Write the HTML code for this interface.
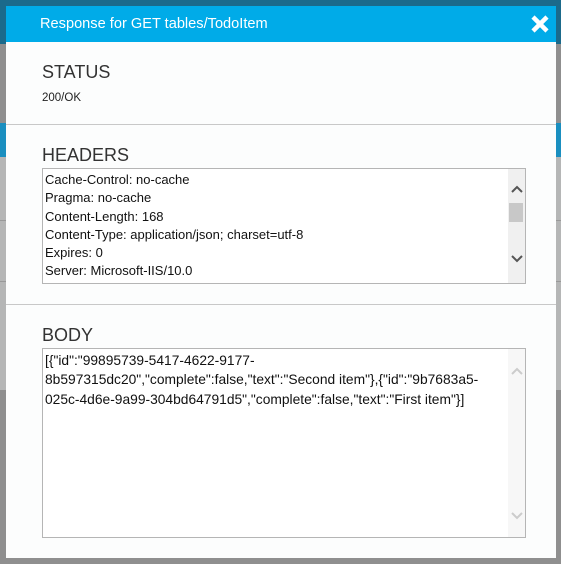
<!DOCTYPE html>
<html><head><style>
*{margin:0;padding:0;box-sizing:border-box}
body{width:561px;height:564px;overflow:hidden;position:relative;background:#8f8f8f;font-family:"Liberation Sans",sans-serif;color:#222}
.a{position:absolute}
.ta{position:absolute;border:1px solid #b5b5b5;background:#fff;font-size:13px;line-height:18.3px;padding:2px 0 0 2px;overflow:hidden;white-space:nowrap;color:#111}
h2{position:absolute;font-weight:normal;font-size:18px;color:#333;left:42px}
.sb{position:absolute;right:0;top:0;bottom:0;width:17px;background:#f0f0f0}
</style></head><body>
<div class="a" style="left:0;top:0;width:561px;height:44px;background:#1b6a8b"></div>
<div class="a" style="left:0;top:123px;width:561px;height:34px;background:#1a8fc0"></div>
<div class="a" style="left:0;top:157px;width:561px;height:233px;background:#b5b6b6"></div>
<div class="a" style="left:0;top:220px;width:561px;height:1px;background:#999"></div>
<div class="a" style="left:0;top:281px;width:561px;height:1px;background:#999"></div>
<div class="a" style="left:6px;top:6px;width:550px;height:552px;background:#fcfdfd"></div>
<div class="a" style="left:6px;top:6px;width:550px;height:36px;background:#00abe8;color:#fff;font-size:14.6px;padding:10px 0 0 34px">Response for GET tables/TodoItem</div>
<svg class="a" style="left:530px;top:14px" width="20" height="20" viewBox="0 0 20 20"><path d="M3 3L17 17M17 3L3 17" stroke="#fff" stroke-width="4.5"/></svg>
<h2 style="top:62px">STATUS</h2>
<div class="a" style="left:42px;top:92px;font-size:11.5px;color:#222">200/OK</div>
<div class="a" style="left:6px;top:124px;width:550px;height:1px;background:#c8c8c8"></div>
<h2 style="top:145px">HEADERS</h2>
<div class="ta" style="left:42px;top:168px;width:484px;height:116px">
Cache-Control: no-cache<br>Pragma: no-cache<br>Content-Length: 168<br>Content-Type: application/json; charset=utf-8<br>Expires: 0<br>Server: Microsoft-IIS/10.0
<div class="sb"><svg class="a" style="left:3px;top:16px" width="12" height="8"><path d="M1 7L6 2L11 7" stroke="#555" stroke-width="2" fill="none"/></svg><div class="a" style="left:1px;top:34px;width:14px;height:19px;background:#c8c8c8"></div><svg class="a" style="left:3px;top:86px" width="12" height="8"><path d="M1 1L6 6L11 1" stroke="#555" stroke-width="2" fill="none"/></svg></div>
</div>
<div class="a" style="left:6px;top:304px;width:550px;height:1px;background:#c8c8c8"></div>
<h2 style="top:325px">BODY</h2>
<div class="ta" style="left:42px;top:348px;width:484px;height:190px;line-height:19.3px;font-size:13.8px">
[{"id":"99895739-5417-4622-9177-<br>8b597315dc20","complete":false,"text":"Second item"},{"id":"9b7683a5-<br>025c-4d6e-9a99-304bd64791d5","complete":false,"text":"First item"}]
<div class="sb" style="background:#f7f7f7"><svg class="a" style="left:3px;top:18px" width="12" height="8"><path d="M1 7L6 2L11 7" stroke="#ccc" stroke-width="2" fill="none"/></svg><svg class="a" style="left:3px;top:163px" width="12" height="8"><path d="M1 1L6 6L11 1" stroke="#ccc" stroke-width="2" fill="none"/></svg></div>
</div>
</body></html>
